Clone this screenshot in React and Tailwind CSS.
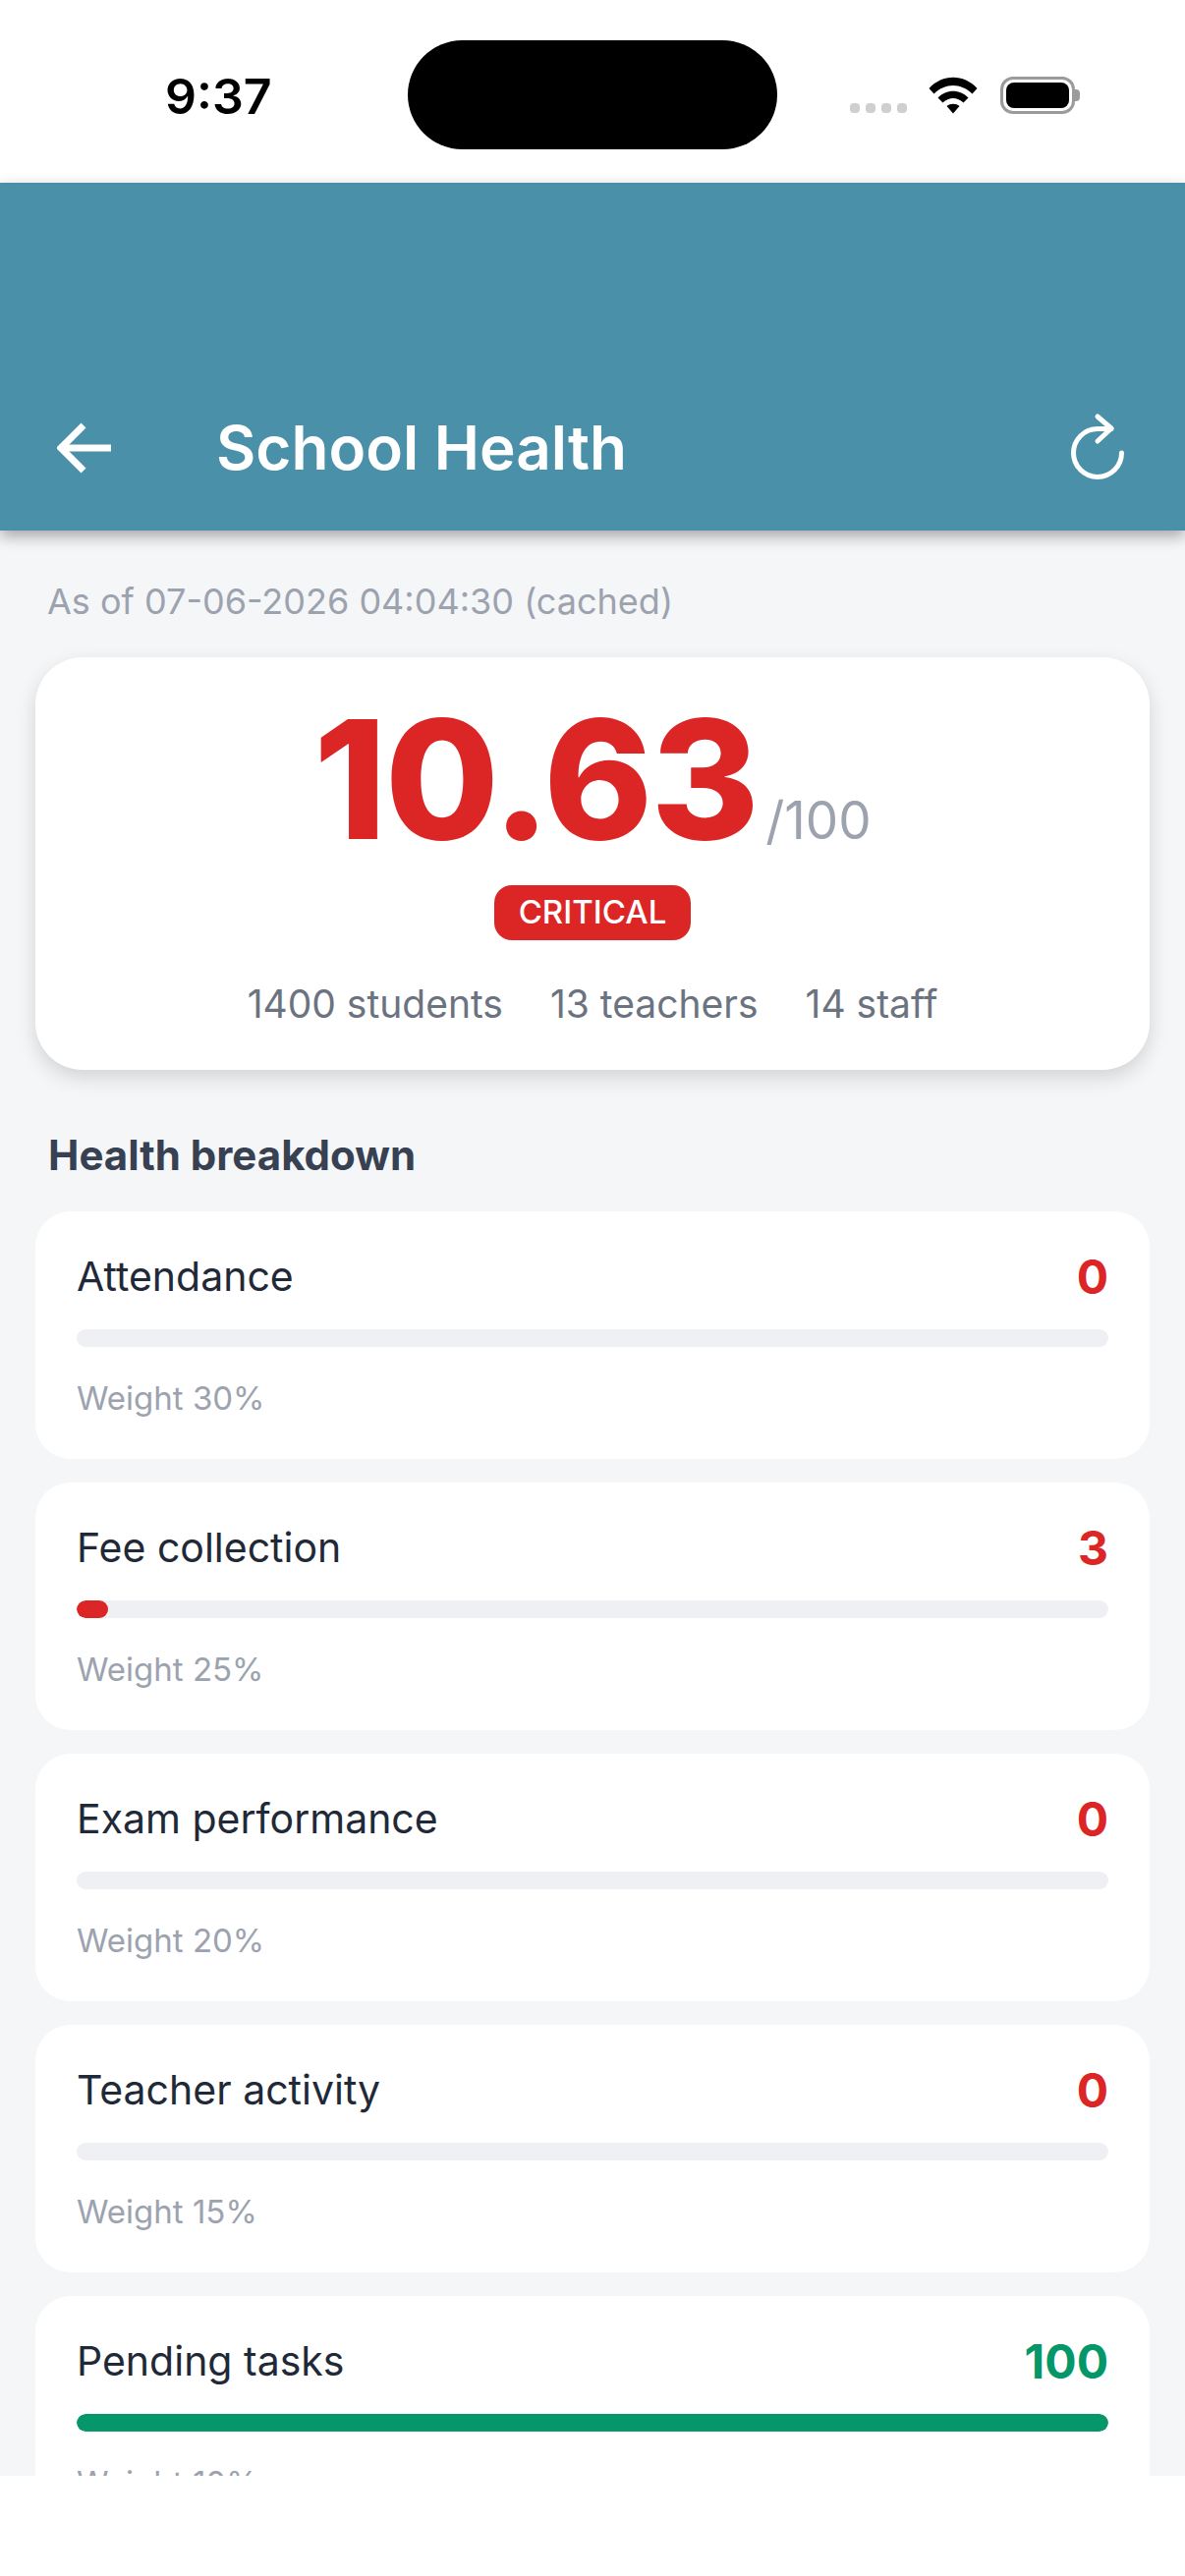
import React from 'react';

const metrics = [
  { label: 'Attendance', value: 0, weight: 30 },
  { label: 'Fee collection', value: 3, weight: 25 },
  { label: 'Exam performance', value: 0, weight: 20 },
  { label: 'Teacher activity', value: 0, weight: 15 },
  { label: 'Pending tasks', value: 100, weight: 10 },
];

const StatusBar = () => (
  <div className="flex h-[186px] items-start bg-white">
    <div className="flex h-[129px] w-[415px] items-end pl-[168px]">
      <span className="text-[50px] leading-[62px] font-semibold text-black">9:37</span>
    </div>
    <div className="mt-[41px] h-[111px] w-[376px] rounded-[56px] bg-black" />
    <div className="mt-[78px] ml-[74px] flex items-end">
      <div className="mb-[1px] flex gap-[6px]">
        <span className="h-[10px] w-[10px] rounded-[4px] bg-[#cfcfcf]" />
        <span className="h-[10px] w-[10px] rounded-[4px] bg-[#cfcfcf]" />
        <span className="h-[10px] w-[10px] rounded-[4px] bg-[#cfcfcf]" />
        <span className="h-[10px] w-[10px] rounded-[4px] bg-[#cfcfcf]" />
      </div>
      <svg className="ml-[22px]" width="50" height="38" viewBox="0 0 50 38">
        <path d="M0.5 12 C14 -3 36 -3 49.5 12 L44.5 17.5 C33 6 17 6 5.5 17.5 Z" fill="#000" />
        <path d="M9.5 21.5 C18 12.5 32 12.5 40.5 21.5 L35.5 26.5 C29 20.5 21 20.5 14.5 26.5 Z" fill="#000" />
        <path d="M18.5 30 C22 27 28 27 31.5 30 L25 37.5 Z" fill="#000" />
      </svg>
      <div className="ml-[23px] flex items-center">
        <div className="h-[38px] w-[76px] rounded-[13px] border-[3px] border-[#9b9b9b] p-[3px]">
          <div className="h-full w-full rounded-[8px] bg-black" />
        </div>
        <span className="h-[12px] w-[5px] rounded-r-[4px] bg-[#9b9b9b]" />
      </div>
    </div>
  </div>
);

const Header = () => (
  <div className="relative z-10 flex h-[354px] items-end bg-[#4a90a8] pb-[48px] shadow-[0_6px_14px_rgba(0,0,0,0.32)]">
    <div className="flex h-[72px] w-full items-center">
      <svg className="ml-[58px]" width="58" height="56" viewBox="0 0 58 56" fill="none" stroke="#fff" strokeWidth="7">
        <path d="M55 28 H5" />
        <path d="M27 5 L4 28 L27 51" />
      </svg>
      <h1 className="ml-[104px] text-[62px] leading-[72px] font-semibold text-white">School Health</h1>
      <svg className="ml-auto mr-[60px] -mt-[8px]" width="60" height="74" viewBox="0 0 60 74" fill="none" stroke="#fff" strokeWidth="5" strokeLinecap="round" strokeLinejoin="round">
        <path d="M55.5 46 A24.5 24.5 0 1 1 31 21.5 H45" />
        <path d="M31 9 L45 21 L31 34" />
      </svg>
    </div>
  </div>
);

const ScoreCard = () => (
  <div className="mx-[36px] mt-[33px] flex h-[420px] flex-col items-center rounded-[48px] bg-white shadow-[0_8px_20px_rgba(0,0,0,0.14)]">
    <div className="mt-[24px] flex items-baseline">
      <span className="text-[168px] leading-[200px] font-extrabold tracking-[-1.8px] text-[#dc2626]">10.63</span>
      <span className="ml-[8px] text-[53px] text-[#9ca3af]">/100</span>
    </div>
    <div className="mt-[8px] flex h-[56px] w-[200px] items-center justify-center rounded-[18px] bg-[#dc2626] text-[33px] font-medium text-white">
      CRITICAL
    </div>
    <div className="mt-[41px] flex gap-[48px] text-[39px] leading-[48px] text-[#6b7280]">
      <span>1400 students</span>
      <span>13 teachers</span>
      <span>14 staff</span>
    </div>
  </div>
);

const MetricCard = ({ label, value, weight }) => {
  const color = value >= 50 ? 'bg-[#059669]' : 'bg-[#dc2626]';
  const text = value >= 50 ? 'text-[#059669]' : 'text-[#dc2626]';
  return (
    <div className="flex h-[252px] shrink-0 flex-col rounded-[36px] bg-white px-[42px] pt-[39px]">
      <div className="flex items-center justify-between">
        <span className="text-[41px] leading-[54px] font-normal text-[#1f2937]">{label}</span>
        <span className={`pt-[2px] text-[48px] leading-[52px] font-bold ${text}`}>{value}</span>
      </div>
      <div className="mt-[27px] h-[18px] overflow-hidden rounded-full bg-[#eff0f4]">
        <div className={`h-full rounded-full ${color}`} style={{ width: `${value}%` }} />
      </div>
      <span className="mt-[31px] text-[33px] leading-[42px] text-[#9ca3af]">Weight {weight}%</span>
    </div>
  );
};

export default function App() {
  return (
    <div className="flex h-[2622px] w-[1206px] flex-col overflow-hidden bg-white font-['Inter',sans-serif]">
      <StatusBar />
      <Header />
      <div className="h-[1980px] overflow-hidden bg-[#f5f6f8]">
        <p className="mt-[48px] ml-[48px] text-[36px] leading-[48px] text-[#9ca3af]">As of 07-06-2026 04:04:30 (cached)</p>
        <ScoreCard />
        <h2 className="mt-[60px] ml-[49px] text-[42px] leading-[54px] font-bold text-[#374151]">Health breakdown</h2>
        <div className="mx-[36px] mt-[30px] flex flex-col gap-[24px]">
          {metrics.map((m) => (
            <MetricCard key={m.label} {...m} />
          ))}
        </div>
      </div>
    </div>
  );
}
